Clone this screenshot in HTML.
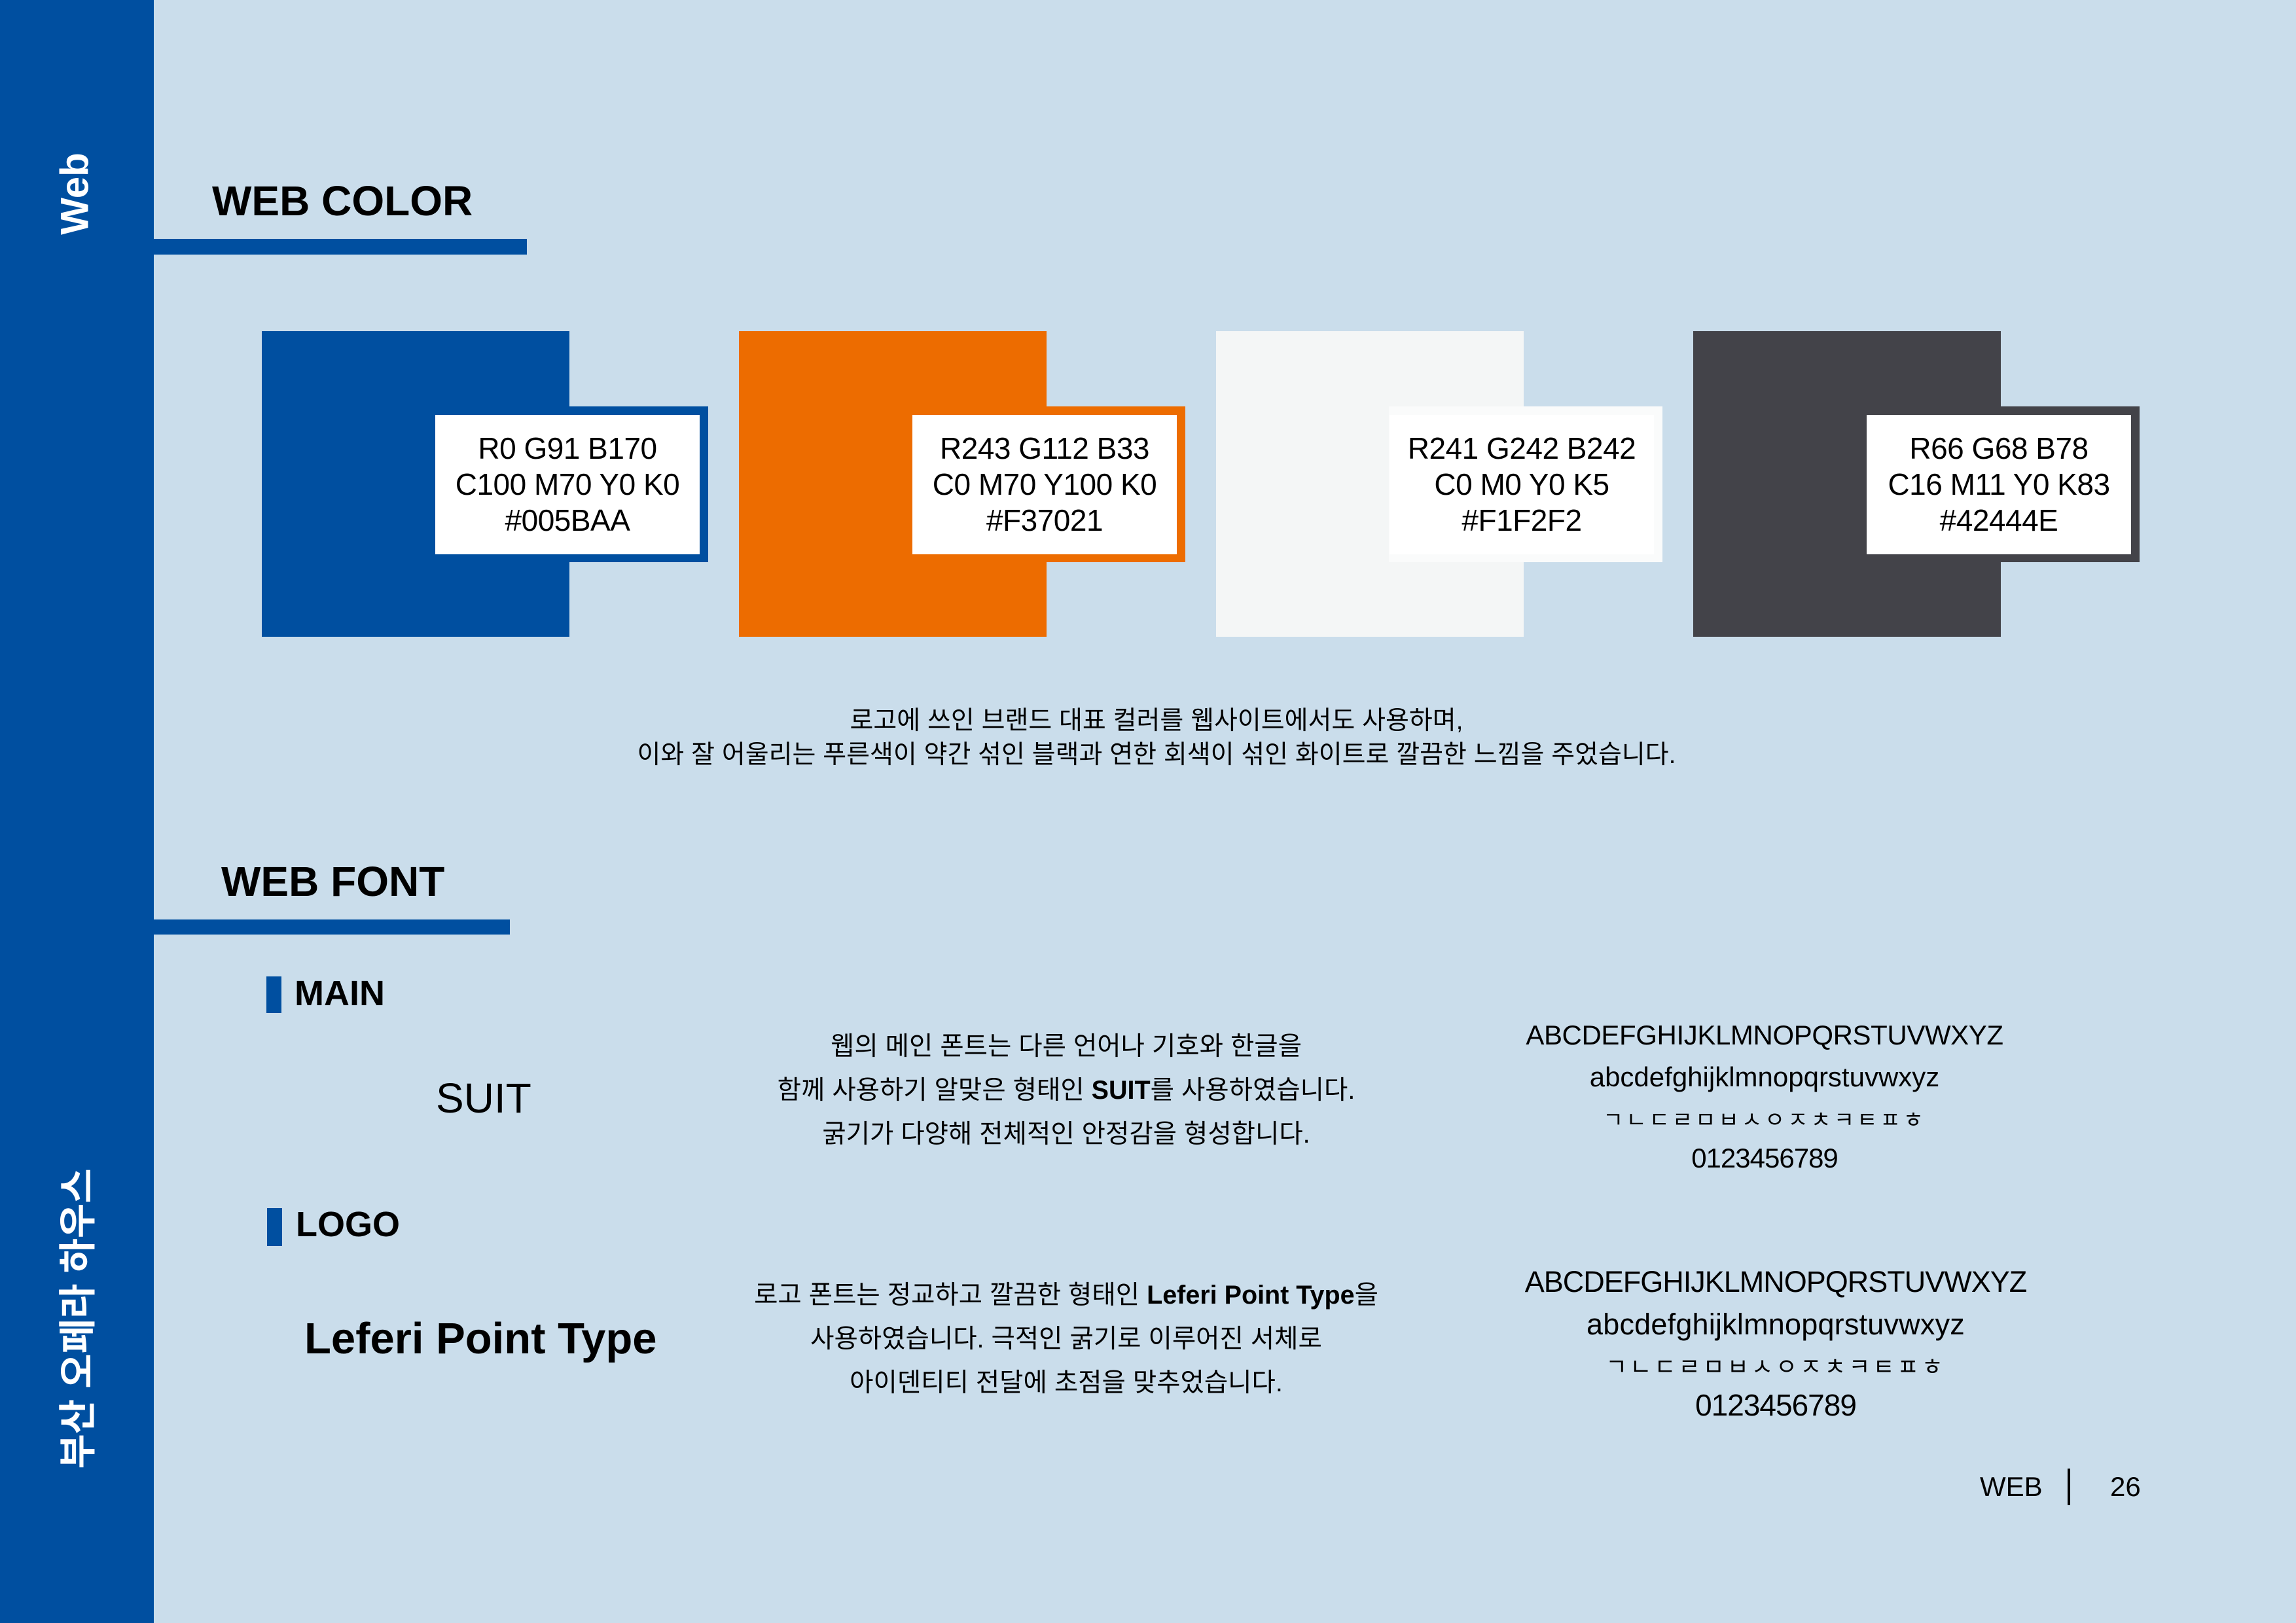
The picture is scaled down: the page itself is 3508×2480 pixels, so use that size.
<!DOCTYPE html>
<html><head><meta charset="utf-8"><style>
*{margin:0;padding:0;box-sizing:border-box}
body{width:3508px;height:2480px;background:#CADDEB;position:relative;overflow:hidden;font-family:"Liberation Sans","Noto Sans CJK KR",sans-serif;color:#000}
.a{position:absolute}
.side{left:0;top:0;width:235px;height:2480px;background:#004FA0}
.vt{position:absolute;color:#fff;font-weight:bold;white-space:nowrap;transform:translate(-50%,-50%) rotate(-90deg);left:114px}
.h{font-weight:bold;font-size:66px;white-space:nowrap}
.bar{background:#004FA0}
.sq{position:absolute;width:470px;height:467px;top:506px}
.fr{position:absolute;top:621px;height:238px;width:418px}
.wb{position:absolute;top:634px;height:213px;width:404px;background:#fff;text-align:center;font-size:46px;line-height:55px;display:flex;flex-direction:column;justify-content:center;letter-spacing:-0.5px}
.c{position:absolute;text-align:center;white-space:nowrap;transform:translateX(-50%)}
.kp{font-size:39.5px;line-height:67px}
.al{font-size:42px;letter-spacing:-1px}
.jm{font-size:34px;letter-spacing:4px}
</style></head><body>
<div class="a side"></div>
<div class="vt" style="top:296px;font-size:60px">Web</div>
<div class="vt" style="top:2015px;font-size:58px">부산 오페라 하우스</div>

<div class="a h" style="left:324px;top:270px;font-size:64px">WEB COLOR</div>
<div class="a bar" style="left:235px;top:365px;width:570px;height:24px"></div>

<div class="sq" style="left:400px;background:#004FA0"></div>
<div class="fr" style="left:664px;background:#004FA0"></div>
<div class="wb" style="left:665px">R0 G91 B170<br>C100 M70 Y0 K0<br>#005BAA</div>

<div class="sq" style="left:1129px;background:#ED6C00"></div>
<div class="fr" style="left:1393px;background:#ED6C00"></div>
<div class="wb" style="left:1394px">R243 G112 B33<br>C0 M70 Y100 K0<br>#F37021</div>

<div class="sq" style="left:1858px;background:#F4F6F6"></div>
<div class="fr" style="left:2122px;background:#FAFBFB"></div>
<div class="wb" style="left:2123px">R241 G242 B242<br>C0 M0 Y0 K5<br>#F1F2F2</div>

<div class="sq" style="left:2587px;background:#434349"></div>
<div class="fr" style="left:2851px;background:#434349"></div>
<div class="wb" style="left:2852px">R66 G68 B78<br>C16 M11 Y0 K83<br>#42444E</div>

<div class="c" style="left:1767px;top:1076px;font-size:39px;line-height:52px">로고에 쓰인 브랜드 대표 컬러를 웹사이트에서도 사용하며,<br>이와 잘 어울리는 푸른색이 약간 섞인 블랙과 연한 회색이 섞인 화이트로 깔끔한 느낌을 주었습니다.</div>

<div class="a h" style="left:338px;top:1310px;font-size:64px">WEB FONT</div>
<div class="a bar" style="left:235px;top:1405px;width:544px;height:23px"></div>

<div class="a bar" style="left:407px;top:1492px;width:23px;height:56px"></div>
<div class="a" style="left:450px;top:1487px;font-size:54px;font-weight:bold">MAIN</div>
<div class="a" style="left:666px;top:1641px;font-size:64px">SUIT</div>

<div class="a bar" style="left:408px;top:1846px;width:23px;height:58px"></div>
<div class="a" style="left:452px;top:1840px;font-size:54px;font-weight:bold">LOGO</div>
<div class="a" style="left:465px;top:2007px;font-size:67px;font-weight:bold">Leferi Point Type</div>

<div class="c kp" style="left:1629px;top:1566px">웹의 메인 폰트는 다른 언어나 기호와 한글을<br>함께 사용하기 알맞은 형태인 <b>SUIT</b>를 사용하였습니다.<br>굵기가 다양해 전체적인 안정감을 형성합니다.</div>
<div class="c kp" style="left:1629px;top:1946px">로고 폰트는 정교하고 깔끔한 형태인 <b>Leferi Point Type</b>을<br>사용하였습니다. 극적인 굵기로 이루어진 서체로<br>아이덴티티 전달에 초점을 맞추었습니다.</div>

<div class="c al" style="left:2696px;top:1558px;letter-spacing:-0.4px">ABCDEFGHIJKLMNOPQRSTUVWXYZ</div>
<div class="c al" style="left:2696px;top:1622px;letter-spacing:0">abcdefghijklmnopqrstuvwxyz</div>
<div class="c jm" style="left:2696px;top:1684px">ㄱㄴㄷㄹㅁㅂㅅㅇㅈㅊㅋㅌㅍㅎ</div>
<div class="c al" style="left:2696px;top:1746px">0123456789</div>

<div class="c al" style="left:2713px;top:1933px;font-size:45px">ABCDEFGHIJKLMNOPQRSTUVWXYZ</div>
<div class="c al" style="left:2713px;top:1998px;font-size:45px;letter-spacing:0.2px">abcdefghijklmnopqrstuvwxyz</div>
<div class="c jm" style="left:2713px;top:2060px;font-size:36px">ㄱㄴㄷㄹㅁㅂㅅㅇㅈㅊㅋㅌㅍㅎ</div>
<div class="c al" style="left:2713px;top:2120px;font-size:46px">0123456789</div>

<div class="a" style="left:3025px;top:2248px;font-size:42px">WEB</div>
<div class="a" style="left:3159px;top:2244px;width:4px;height:56px;background:#000"></div>
<div class="a" style="left:3224px;top:2248px;font-size:42px">26</div>
</body></html>
